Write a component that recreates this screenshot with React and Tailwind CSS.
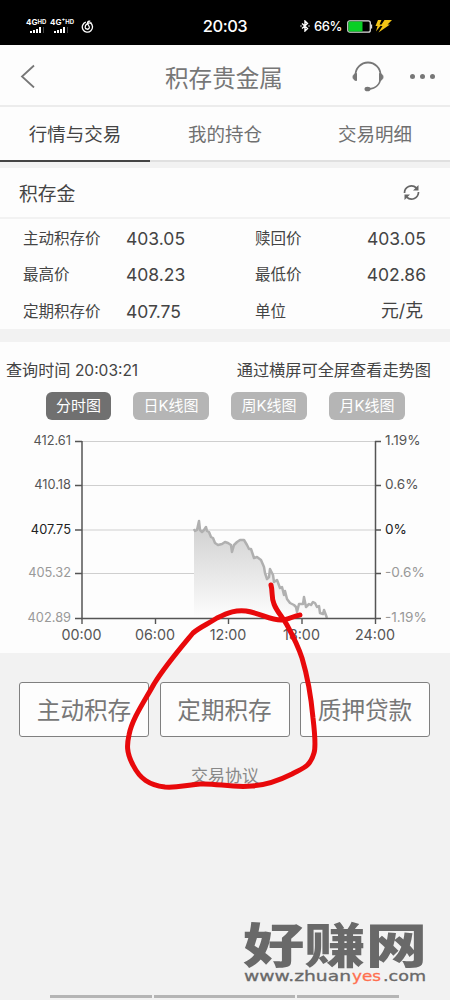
import { useState } from "react";

const tabs = ["行情与交易", "我的持仓", "交易明细"];

const quotes = [
  ["主动积存价", "403.05", "赎回价", "403.05"],
  ["最高价", "408.23", "最低价", "402.86"],
  ["定期积存价", "407.75", "单位", "元/克"],
];

const periods = ["分时图", "日K线图", "周K线图", "月K线图"];
const actions = ["主动积存", "定期积存", "质押贷款"];

const gridRows = [
  { y: 30.5, price: "412.61", rate: "1.19%", color: "#555" },
  { y: 74.5, price: "410.18", rate: "0.6%", color: "#555" },
  { y: 119, price: "407.75", rate: "0%", color: "#222" },
  { y: 162.5, price: "405.32", rate: "-0.6%", color: "#999" },
  { y: 207.5, price: "402.89", rate: "-1.19%", color: "#999" },
];

const hours = [
  { x: 82, label: "00:00" },
  { x: 155.5, label: "06:00" },
  { x: 228.5, label: "12:00" },
  { x: 302, label: "18:00" },
  { x: 375.5, label: "24:00" },
];

const pricePoints =
  "194,118 195,120 197,119 199,110 200,119 202,121 204,119 206,116 207,120 209,121 211,126 213,127 215,132 218,134 222,133 225,131 228,132 231,134 232,141 234,134 237,131 240,129 244,129 247,134 249,138 251,138 254,147 257,146 261,149 264,156 265,162 267,168 269,166 270,158 273,164 274,171 277,169 280,177 282,176 284,184 285,180 287,188 290,192 294,194 296,196 297,201 299,193 303,193 304,186 306,196 309,193 311,194 313,191 315,192 317,196 319,195 320,202 323,203 324,199 327,207";

function StatusBar() {
  return (
    <div className="grid h-[45px] grid-cols-3 items-center bg-black pt-[7px] text-white">
      <div className="flex items-center pl-[26px]">
        <Signal label="4G" sup="HD" />
        <Signal label="4G⁺" sup="HD" wide />
        <svg className="ml-1.5 size-[13px]" viewBox="0 0 14 14" fill="none" stroke="currentColor" strokeWidth="1.4">
          <path d="M5.200 2.300A5.500 5.500 0 1 0 10 3" />
          <path d="M11.500 3.300C8 2.500 4.200 4.800 4.500 8c.3 2.300 3.600 2.600 4.400.6C9.600 6.500 7 5.300 7 3.200 7 1.600 8.500.8 10 1.400" />
        </svg>
      </div>
      <div className="text-center text-[16.500px] leading-5 font-medium tracking-[-0.500px]">20:03</div>
      <div className="flex items-center text-[13px]">
        <svg className="h-3 w-2.5" viewBox="0 0 10 12" fill="none" stroke="currentColor" strokeWidth="1.4">
          <path d="M2 3.500l5.500 5L5 11V1l2.500 2.500-5.500 5M.5 6h1M8.500 6h1" />
        </svg>
        <span className="ml-1 w-7 pt-px font-medium tracking-[-0.400px]">66%</span>
        <svg className="ml-[5px] h-[13px] w-[26px]" viewBox="0 0 26 13">
          <rect x=".8" y=".8" width="22.500" height="11.400" rx="2" fill="none" stroke="#ddd" strokeWidth="1.300" />
          <rect x="1.500" y="1.500" width="14" height="10" fill="#08cf25" />
          <path d="M24.500 4.500v4" stroke="#ddd" strokeWidth="1.300" />
        </svg>
        <svg className="ml-0.5 h-[13px] w-[17px]" viewBox="0 0 17 13" fill="#f3c515">
          <path d="M3 0h3.500L4.500 4.500H6.500L1 11.500 2.500 6H.5zM9.500 0H17l-4.500 4.500h2.500L3.500 12.500 7.500 6H5.500z" />
        </svg>
      </div>
    </div>
  );
}

function Signal({ label, sup, wide }) {
  return (
    <div className={wide ? "ml-1 w-[25px]" : "w-[20px]"}>
      <div className="flex h-[7px] items-start text-[8px] leading-[7px] font-bold whitespace-nowrap">
        {label}
        <span className="text-[6px] leading-[5px]">{sup}</span>
      </div>
      <svg className="mt-px ml-[4px] h-[6px] w-[15px]" viewBox="0 0 15 6" fill="white">
        <path d="M0 4h2v2H0zM3 3h2v3H3zM6 2h2v4H6zM9 0h2v6H9z" />
        <path d="M13 0h1v6h-1z" fill="#444" />
      </svg>
    </div>
  );
}

function Header() {
  return (
    <header className="flex h-[62px] items-center border-b-2 border-[#ececec] bg-[#fdfdfd] text-[#777]">
      <svg className="mt-0.5 ml-5 h-6 w-[15px]" viewBox="0 0 15 24" fill="none" stroke="currentColor" strokeWidth="1.800">
        <path d="M14 1.500L2 12.500 14 23.500" />
      </svg>
      <h1 className="ml-[130px] w-[120px] pt-[7px] text-[23.600px] whitespace-nowrap">积存贵金属</h1>
      <svg className="mt-0.5 ml-[67px] h-[31px] w-[32px]" viewBox="0 0 32 31" fill="none" stroke="currentColor" strokeWidth="1.800">
        <path d="M3.500 15.500V14a12.500 12.500 0 0 1 25 0v2c0 7-4.500 11.500-12 12" />
        <path d="M4.500 12.500v7C2.500 19.500 1 18 1 16s1.500-3.500 3.500-3.500zM27.500 12.500v7c2 0 3.500-1.500 3.500-3.500s-1.500-3.500-3.500-3.500z" fill="currentColor" strokeWidth="1" />
        <ellipse cx="15.500" cy="28" rx="3" ry="2.300" fill="currentColor" stroke="none" />
      </svg>
      <div className="mt-0.5 ml-[26px] flex gap-[5px]">
        <i className="size-[5px] rounded-full bg-[#777]" />
        <i className="size-[5px] rounded-full bg-[#777]" />
        <i className="size-[5px] rounded-full bg-[#777]" />
      </div>
    </header>
  );
}

function PriceChart() {
  return (
    <svg className="block h-[232px] w-[450px]" viewBox="0 0 450 232">
      <defs>
        <linearGradient id="area" x1="0" y1="0" x2="0" y2="1">
          <stop offset="0" stopColor="#cecece" />
          <stop offset="1" stopColor="#fdfdfd" />
        </linearGradient>
      </defs>
      {gridRows.map((row) => (
        <g key={row.price}>
          <path d={`M82 ${row.y}H375`} stroke="#cfcfcf" strokeWidth="1.2" />
          <path d={`M75 ${row.y}h7M375 ${row.y}h6`} stroke="#555" strokeWidth="1.4" />
          <text x="71" y={row.y + 3.5} textAnchor="end" fontSize="12.8" fill={row.color}>
            {row.price}
          </text>
          <text x="385" y={row.y + 3.5} fontSize="13.6" fill={row.color}>
            {row.rate}
          </text>
        </g>
      ))}
      <polygon points={`194,207 ${pricePoints}`} fill="url(#area)" />
      <polyline points={pricePoints} fill="none" stroke="#b0b0b0" strokeWidth="2.5" strokeLinejoin="round" />
      <path d="M82 30v177.500h293.500V30" fill="none" stroke="#555" strokeWidth="1.5" />
      {hours.map((hour) => (
        <g key={hour.label}>
          <path d={`M${hour.x} 207v6`} stroke="#555" strokeWidth="1.4" />
          <text x={hour.x - 0.5} y="228.5" textAnchor="middle" fontSize="14.3" fill="#555">
            {hour.label}
          </text>
        </g>
      ))}
    </svg>
  );
}

function Scribble() {
  return (
    <svg className="pointer-events-none absolute top-0 left-0 h-[1000px] w-[450px]" viewBox="0 0 450 1000">
      <path
        d="M271 585C273 592 271 597 274 604C277 612 282 616 287 625C293 636 298 646 302 658C308 678 311 696 313 718C315 735 316 747 314 753C310 767 303 768 292 774C278 781 267 785 252 786C232 788 216 783 200 784C185 785 178 788 165 787C149 785 140 779 133 765C126 752 127 744 129 735C132 719 144 702 154 684C165 666 178 651 193 633C200 627 208 624 217 618C229 612 236 610 246 611C260 613 270 620 281 620C288 620 293 616 300 615"
        fill="none"
        stroke="#e8090b"
        strokeWidth="5"
        strokeLinecap="round"
        strokeLinejoin="round"
      />
    </svg>
  );
}

function Watermark() {
  return (
    <svg className="mr-[22px] ml-auto h-[70px] w-[185px]" viewBox="0 0 185 70" fill="#696969">
      <text x="0" y="42" fontSize="48" fontWeight="900" textLength="184" lengthAdjust="spacingAndGlyphs">
        好赚网
      </text>
      <text x="1" y="60" fontSize="14" fontFamily="DejaVu Sans" stroke="#696969" strokeWidth=".3" textLength="107" lengthAdjust="spacingAndGlyphs">
        www.zhuan
      </text>
      <text x="109" y="60" fontSize="14" fontFamily="DejaVu Sans" fill="#ff7050" stroke="#ff7050" strokeWidth=".3" textLength="29" lengthAdjust="spacingAndGlyphs">
        yes
      </text>
      <text x="140" y="60" fontSize="14" fontFamily="DejaVu Sans" stroke="#696969" strokeWidth=".3" textLength="43" lengthAdjust="spacingAndGlyphs">
        .com
      </text>
    </svg>
  );
}

export default function App() {
  const [tab, setTab] = useState(0);
  const [period, setPeriod] = useState(0);

  return (
    <div className="relative flex h-[1000px] w-[450px] flex-col overflow-hidden bg-[#f2f2f2] font-[Inter,'Noto_Sans_CJK_SC',sans-serif] text-[#444]">
      <StatusBar />
      <Header />
      <nav className="grid h-[55px] grid-cols-3 bg-[#fdfdfd]">
        {tabs.map((label, index) => (
          <button
            className={
              index === tab
                ? "border-b-2 border-[#444] pt-[3px] text-[18.500px] text-[#444]"
                : "border-b-2 border-[#e0e0e0] pt-[3px] text-[18.500px] text-[#707070]"
            }
            key={label}
            onClick={() => setTab(index)}
            type="button"
          >
            {label}
          </button>
        ))}
      </nav>

      <section className="mt-1.5 h-[161px] bg-[#fdfdfd]">
        <div className="flex h-[51px] items-center justify-between border-b-2 border-[#f2f2f2] pr-[30px] pl-[19px]">
          <h2 className="pt-[5px] text-[18.800px]">积存金</h2>
          <svg className="size-[17px]" viewBox="0 0 17 17" fill="none" stroke="#666" strokeWidth="1.700">
            <path d="M1.500 9C1.500 3 8.500-.5 13.500 4M15.500 8c0 6-7 9.500-12 5" />
            <path d="M15.500 1v5.500H10zM1.500 16v-5.500H7z" fill="#666" stroke="none" />
          </svg>
        </div>
        <div className="pt-px">
          {quotes.map((row) => (
            <div className="flex h-[36.500px] items-center" key={row[0]}>
              <span className="ml-[23px] w-[103px] text-[15.500px]">{row[0]}</span>
              <span className="w-[129px] pt-px text-[17.500px]">{row[1]}</span>
              <span className="w-[60px] text-[15.500px]">{row[2]}</span>
              <span className={row[3] === "元/克" ? "ml-auto pr-[27px] text-[17.800px]" : "ml-auto pt-px pr-6 text-[17.500px]"}>
                {row[3]}
              </span>
            </div>
          ))}
        </div>
      </section>

      <section className="mt-[13px] h-[311px] bg-[#fdfdfd]">
        <div className="flex h-[50px] items-center justify-between pt-[7px] pr-[19px] pl-[6px]">
          <span className="text-[16.100px]">
            查询时间 <span className="text-[15.500px]">20:03:21</span>
          </span>
          <span className="text-[16.200px]">通过横屏可全屏查看走势图</span>
        </div>
        <div className="flex h-[28px] gap-[22px] pl-[46px]">
          {periods.map((label, index) => (
            <button
              className={
                index === period
                  ? "w-[65px] shrink-0 rounded-md bg-[#707070] pt-px text-[15px] text-white"
                  : "w-[76px] shrink-0 rounded-md bg-[#b5b5b5] pt-px text-[15px] text-white"
              }
              key={label}
              onClick={() => setPeriod(index)}
              type="button"
            >
              {label}
            </button>
          ))}
        </div>
        <div className="-mt-[9px]">
          <PriceChart />
        </div>
      </section>

      <div className="mt-[29px] flex gap-[10.500px] pl-[19px]">
        {actions.map((label) => (
          <button
            className="h-[55px] w-[130px] rounded-[3px] border border-[#808080] bg-[#fdfdfd] pt-0.5 text-[23.600px] text-[#777]"
            key={label}
            type="button"
          >
            {label}
          </button>
        ))}
      </div>
      <p className="mt-[27px] text-center text-[17px] leading-6 text-[#888]">交易协议</p>

      <div className="mt-auto">
        <Watermark />
        <div className="mt-1 flex gap-0.5 pb-0.5 pl-[50px]">
          <i className="h-[3px] w-[102px] bg-[#b5b5b5]" />
          <i className="h-[3px] w-[141px] bg-[#b5b5b5]" />
          <i className="h-[3px] w-[102px] bg-[#b5b5b5]" />
        </div>
      </div>

      <Scribble />
    </div>
  );
}
